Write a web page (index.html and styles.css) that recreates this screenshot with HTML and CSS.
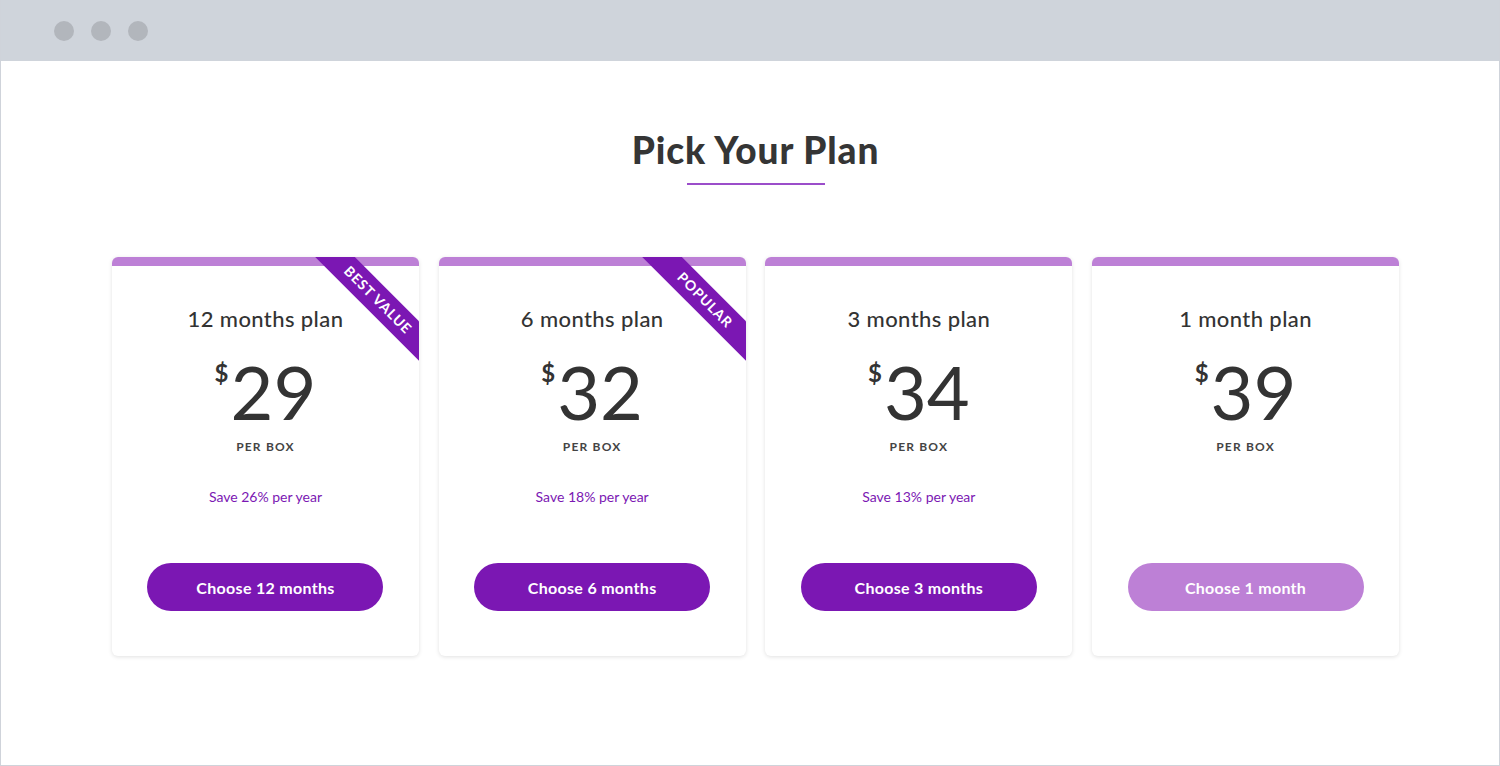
FILE: index.html
```html
<!DOCTYPE html>
<html>
<head>
<meta charset="utf-8">
<link rel="stylesheet" href="styles.css">
</head>
<body>
<div class="window">
  <div class="titlebar">
    <span class="dot"></span><span class="dot"></span><span class="dot"></span>
  </div>
  <main class="content">
    <h1 class="title">Pick Your Plan</h1>
    <div class="rule"></div>
    <div class="cards">
      <div class="card">
        <div class="bar"></div>
        <div class="ribbon">BEST VALUE</div>
        <div class="plan">12 months plan</div>
        <div class="price"><span class="cur">$</span>29</div>
        <div class="per">PER BOX</div>
        <div class="save">Save 26% per year</div>
        <button class="btn">Choose 12 months</button>
      </div>
      <div class="card">
        <div class="bar"></div>
        <div class="ribbon">POPULAR</div>
        <div class="plan">6 months plan</div>
        <div class="price"><span class="cur">$</span>32</div>
        <div class="per">PER BOX</div>
        <div class="save">Save 18% per year</div>
        <button class="btn">Choose 6 months</button>
      </div>
      <div class="card">
        <div class="bar"></div>
        <div class="plan">3 months plan</div>
        <div class="price"><span class="cur">$</span>34</div>
        <div class="per">PER BOX</div>
        <div class="save">Save 13% per year</div>
        <button class="btn">Choose 3 months</button>
      </div>
      <div class="card">
        <div class="bar"></div>
        <div class="plan">1 month plan</div>
        <div class="price"><span class="cur">$</span>39</div>
        <div class="per">PER BOX</div>
        <div class="save"></div>
        <button class="btn btn-light">Choose 1 month</button>
      </div>
    </div>
  </main>
</div>
</body>
</html>
```
FILE: styles.css
```css
* { box-sizing: border-box; }
html, body { margin: 0; padding: 0; background: #fff; }
body { font-family: Lato, "Noto Sans", sans-serif; color: #333; }
.window {
  width: 1500px;
  height: 766px;
  border: 1px solid #cfd3da;
  border-top: none;
  overflow: hidden;
}
.titlebar {
  height: 61px;
  background: #cfd4db;
  display: flex;
  align-items: center;
  padding-left: 53px;
  gap: 17px;
}
.dot {
  width: 20px; height: 20px; border-radius: 50%;
  background: #b2b6bc;
}
.content {
  display: flex;
  flex-direction: column;
  align-items: center;
  padding-left: 11px;
}
.title {
  margin: 68px 0 0;
  font-size: 37px;
  font-weight: 900;
  color: #353535;
  line-height: 42px;
  letter-spacing: 0.9px;
}
.rule {
  width: 138px; height: 2px;
  background: #9b4dca;
  margin-top: 12px;
}
.cards {
  display: flex;
  gap: 19.7px;
  margin-top: 72px;
}
.card {
  position: relative;
  width: 307px;
  height: 399px;
  background: #fff;
  border-radius: 6px;
  box-shadow: 0 1px 4px rgba(0,0,0,0.12);
  overflow: hidden;
  display: flex;
  flex-direction: column;
  align-items: center;
}
.bar {
  align-self: stretch;
  height: 9px;
  flex: none;
  background: #bd80d6;
}
.ribbon {
  position: absolute;
  left: 181px;
  top: 29px;
  width: 170px;
  height: 28px;
  background: #7b17b3;
  color: #fff;
  font-size: 14px;
  font-weight: 700;
  text-align: center;
  line-height: 28px;
  letter-spacing: 0.9px;
  transform: rotate(45deg);
}
.plan {
  margin-top: 39px;
  font-size: 22px;
  line-height: 28px;
  font-weight: 500;
  color: #333;
  letter-spacing: 0.4px;
}
.price {
  margin-top: 22px;
  font-size: 74px;
  line-height: 74px;
  font-weight: 400;
  color: #333;
  display: flex;
  align-items: flex-start;
}
.cur {
  font-size: 24px;
  line-height: 24px;
  font-weight: 700;
  margin-top: 6px;
  margin-right: 2px;
}
.per {
  margin-top: 10px;
  font-size: 12px;
  line-height: 16px;
  font-weight: 700;
  letter-spacing: 1.2px;
  color: #444;
}
.save {
  margin-top: 33px;
  height: 18px;
  font-size: 14px;
  line-height: 18px;
  color: #7b17b3;
}
.btn {
  margin-top: 57px;
  width: 236px;
  height: 48px;
  border: none;
  border-radius: 24px;
  background: #7b17b3;
  color: #fff;
  font-family: Lato, "Noto Sans", sans-serif;
  font-size: 16px;
  font-weight: 700;
  letter-spacing: 0.3px;
}
.btn-light { background: #bd80d6; }
```
